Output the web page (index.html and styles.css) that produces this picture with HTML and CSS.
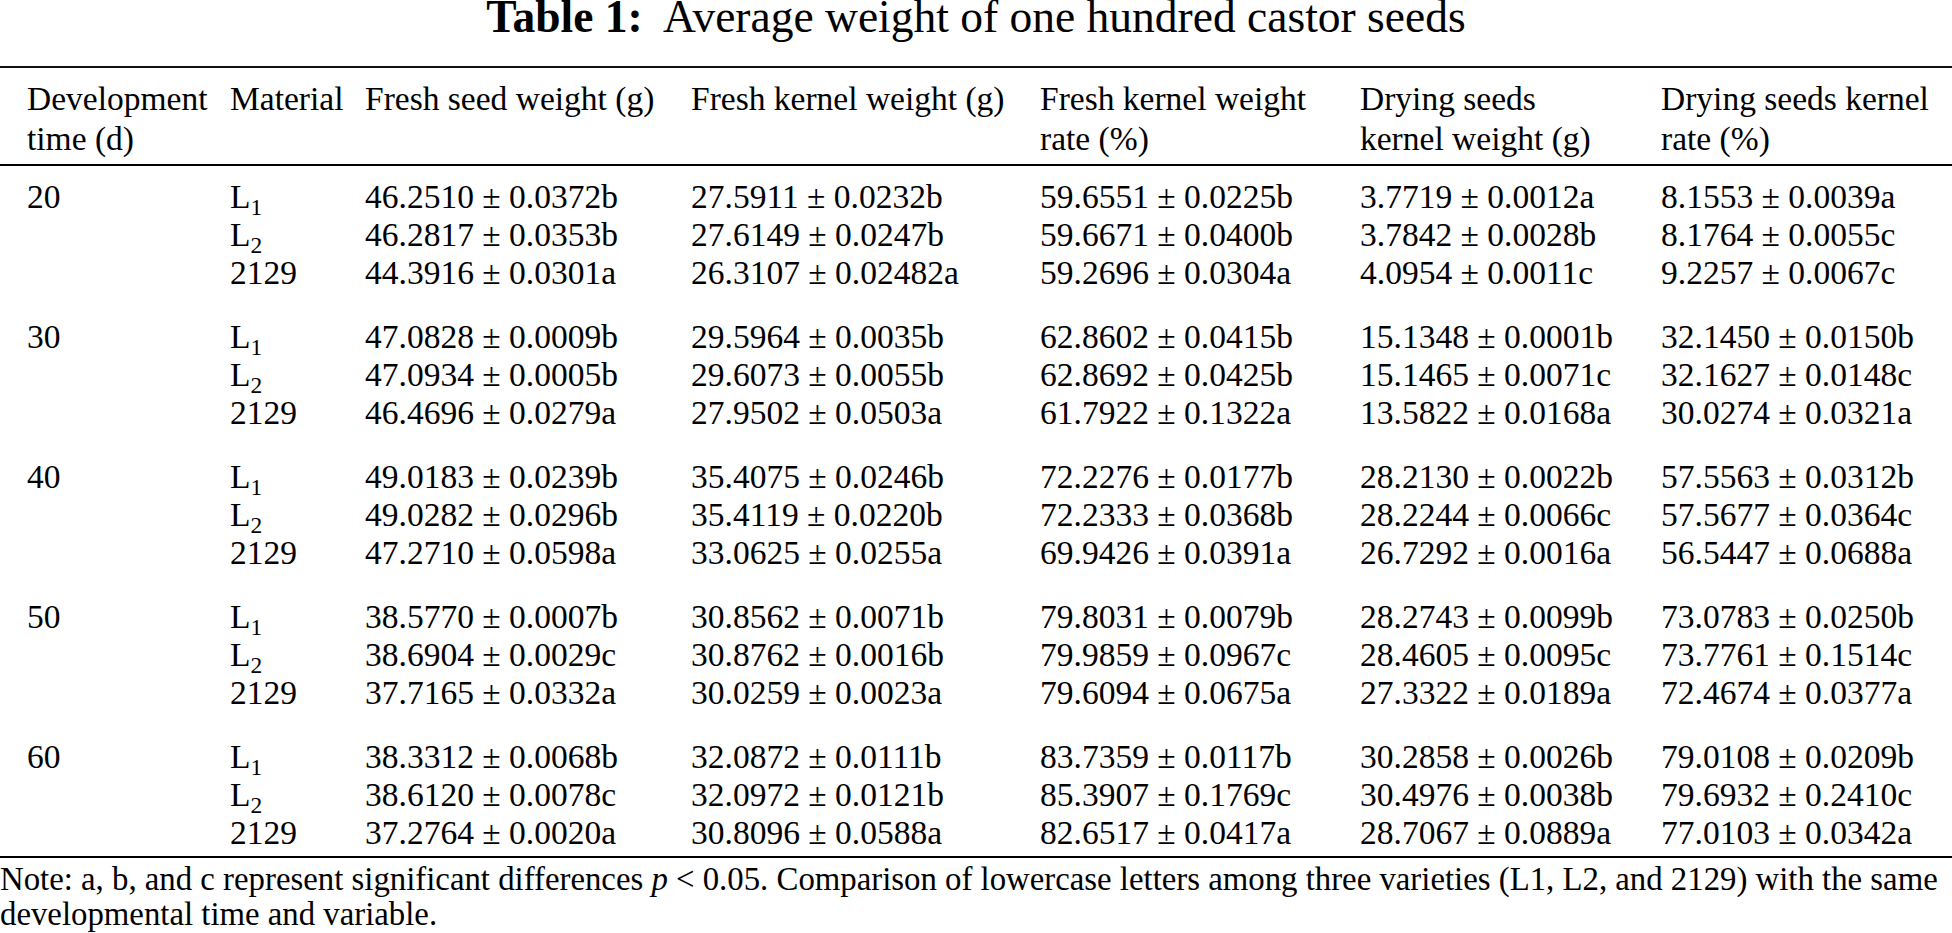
FILE: index.html
```html
<!DOCTYPE html>
<html lang="en">
<head>
<meta charset="utf-8">
<title>Table 1: Average weight of one hundred castor seeds</title>
<link rel="stylesheet" href="styles.css">
</head>
<body>
<div class="page">
  <h1 class="caption"><b>Table 1:</b>&nbsp; Average weight of one hundred castor seeds</h1>
  <table class="data">
    <colgroup>
      <col class="c1"><col class="c2"><col class="c3"><col class="c4"><col class="c5"><col class="c6"><col class="c7">
    </colgroup>
    <thead>
      <tr>
        <th class="first">Development time (d)</th>
        <th>Material</th>
        <th>Fresh seed weight (g)</th>
        <th>Fresh kernel weight (g)</th>
        <th>Fresh kernel weight rate (%)</th>
        <th>Drying seeds kernel weight (g)</th>
        <th>Drying seeds kernel rate (%)</th>
      </tr>
    </thead>
    <tbody class="grp">
      <tr><td class="first">20</td><td>L<sub>1</sub></td><td>46.2510 ± 0.0372b</td><td>27.5911 ± 0.0232b</td><td>59.6551 ± 0.0225b</td><td>3.7719 ± 0.0012a</td><td>8.1553 ± 0.0039a</td></tr>
      <tr><td class="first"></td><td>L<sub>2</sub></td><td>46.2817 ± 0.0353b</td><td>27.6149 ± 0.0247b</td><td>59.6671 ± 0.0400b</td><td>3.7842 ± 0.0028b</td><td>8.1764 ± 0.0055c</td></tr>
      <tr><td class="first"></td><td>2129</td><td>44.3916 ± 0.0301a</td><td>26.3107 ± 0.02482a</td><td>59.2696 ± 0.0304a</td><td>4.0954 ± 0.0011c</td><td>9.2257 ± 0.0067c</td></tr>
    </tbody>
    <tbody class="grp">
      <tr><td class="first">30</td><td>L<sub>1</sub></td><td>47.0828 ± 0.0009b</td><td>29.5964 ± 0.0035b</td><td>62.8602 ± 0.0415b</td><td>15.1348 ± 0.0001b</td><td>32.1450 ± 0.0150b</td></tr>
      <tr><td class="first"></td><td>L<sub>2</sub></td><td>47.0934 ± 0.0005b</td><td>29.6073 ± 0.0055b</td><td>62.8692 ± 0.0425b</td><td>15.1465 ± 0.0071c</td><td>32.1627 ± 0.0148c</td></tr>
      <tr><td class="first"></td><td>2129</td><td>46.4696 ± 0.0279a</td><td>27.9502 ± 0.0503a</td><td>61.7922 ± 0.1322a</td><td>13.5822 ± 0.0168a</td><td>30.0274 ± 0.0321a</td></tr>
    </tbody>
    <tbody class="grp">
      <tr><td class="first">40</td><td>L<sub>1</sub></td><td>49.0183 ± 0.0239b</td><td>35.4075 ± 0.0246b</td><td>72.2276 ± 0.0177b</td><td>28.2130 ± 0.0022b</td><td>57.5563 ± 0.0312b</td></tr>
      <tr><td class="first"></td><td>L<sub>2</sub></td><td>49.0282 ± 0.0296b</td><td>35.4119 ± 0.0220b</td><td>72.2333 ± 0.0368b</td><td>28.2244 ± 0.0066c</td><td>57.5677 ± 0.0364c</td></tr>
      <tr><td class="first"></td><td>2129</td><td>47.2710 ± 0.0598a</td><td>33.0625 ± 0.0255a</td><td>69.9426 ± 0.0391a</td><td>26.7292 ± 0.0016a</td><td>56.5447 ± 0.0688a</td></tr>
    </tbody>
    <tbody class="grp">
      <tr><td class="first">50</td><td>L<sub>1</sub></td><td>38.5770 ± 0.0007b</td><td>30.8562 ± 0.0071b</td><td>79.8031 ± 0.0079b</td><td>28.2743 ± 0.0099b</td><td>73.0783 ± 0.0250b</td></tr>
      <tr><td class="first"></td><td>L<sub>2</sub></td><td>38.6904 ± 0.0029c</td><td>30.8762 ± 0.0016b</td><td>79.9859 ± 0.0967c</td><td>28.4605 ± 0.0095c</td><td>73.7761 ± 0.1514c</td></tr>
      <tr><td class="first"></td><td>2129</td><td>37.7165 ± 0.0332a</td><td>30.0259 ± 0.0023a</td><td>79.6094 ± 0.0675a</td><td>27.3322 ± 0.0189a</td><td>72.4674 ± 0.0377a</td></tr>
    </tbody>
    <tbody class="grp">
      <tr><td class="first">60</td><td>L<sub>1</sub></td><td>38.3312 ± 0.0068b</td><td>32.0872 ± 0.0111b</td><td>83.7359 ± 0.0117b</td><td>30.2858 ± 0.0026b</td><td>79.0108 ± 0.0209b</td></tr>
      <tr><td class="first"></td><td>L<sub>2</sub></td><td>38.6120 ± 0.0078c</td><td>32.0972 ± 0.0121b</td><td>85.3907 ± 0.1769c</td><td>30.4976 ± 0.0038b</td><td>79.6932 ± 0.2410c</td></tr>
      <tr><td class="first"></td><td>2129</td><td>37.2764 ± 0.0020a</td><td>30.8096 ± 0.0588a</td><td>82.6517 ± 0.0417a</td><td>28.7067 ± 0.0889a</td><td>77.0103 ± 0.0342a</td></tr>
    </tbody>
  </table>
  <p class="note">Note: a, b, and c represent significant differences <i>p</i> &lt; 0.05. Comparison of lowercase letters among three varieties (L1, L2, and 2129) with the same developmental time and variable.</p>
</div>
</body>
</html>
```

FILE: styles.css
```css
html, body {
  margin: 0;
  padding: 0;
  background: #fff;
}

.page {
  width: 1952px;
  font-family: "Liberation Serif", "Times New Roman", serif;
  color: #000;
}

.caption {
  margin: 0 0 32px;
  font-size: 45.5px;
  line-height: 34px;
  font-weight: normal;
  text-align: center;
}

.caption b {
  font-weight: bold;
}

.data {
  width: 1952px;
  table-layout: fixed;
  border-collapse: collapse;
  border-top: 2px solid #111;
  border-bottom: 2px solid #000;
  font-size: 33.5px;
}

.c1 { width: 230px; }
.c2 { width: 135px; }
.c3 { width: 326px; }
.c4 { width: 349px; }
.c5 { width: 320px; }
.c6 { width: 301px; }
.c7 { width: 291px; }

.data th,
.data td {
  padding: 0;
  text-align: left;
  vertical-align: top;
  white-space: nowrap;
}

.data th {
  font-weight: normal;
  line-height: 40px;
  padding-top: 11px;
  padding-bottom: 5px;
  white-space: normal;
  border-bottom: 2px solid #000;
}

.data th:nth-child(5) { padding-right: 20px; }
.data th:nth-child(6) { padding-right: 41px; }
.data th:nth-child(7) { padding-right: 10px; }

.data .first {
  padding-left: 27px;
}

.data td {
  line-height: 38px;
}

.grp:first-of-type tr:first-child td {
  padding-top: 12px;
}

.grp + .grp tr:first-child td {
  padding-top: 26px;
}

.grp:last-of-type tr:last-child td {
  padding-bottom: 4px;
}

sub {
  font-size: 0.7em;
  line-height: 0;
  vertical-align: -0.28em;
}

.note {
  margin: 4px 0 0;
  font-size: 32.8px;
  line-height: 35px;
}
```
